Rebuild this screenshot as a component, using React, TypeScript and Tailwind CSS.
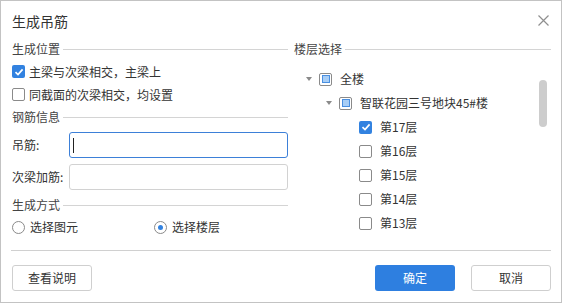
import React from "react";

const font = { fontFamily: '"Noto Sans CJK SC", "Noto Sans", sans-serif' };

function Check({ checked }: { checked?: boolean }) {
  if (checked)
    return (
      <span className="flex h-[13px] w-[13px] shrink-0 items-center justify-center rounded-[2px] bg-[#3282e0]">
        <svg width="10" height="10" viewBox="0 0 10 10">
          <path d="M1.5 5.2 L4 7.6 L8.6 2.4" fill="none" stroke="#fff" strokeWidth="1.7" />
        </svg>
      </span>
    );
  return <span className="block h-[13px] w-[13px] shrink-0 rounded-[2px] border border-[#8a8a8a] bg-white" />;
}

function Partial() {
  return (
    <span className="flex h-[13px] w-[13px] shrink-0 items-center justify-center rounded-[2px] border border-[#8a8a8a] bg-white">
      <span className="block h-[8px] w-[8px] border border-[#4a8fe0] bg-[#a8cef6]" />
    </span>
  );
}

function Radio({ checked }: { checked?: boolean }) {
  return (
    <span className="flex h-[13px] w-[13px] shrink-0 items-center justify-center rounded-full border border-[#8a8a8a] bg-white">
      {checked && <span className="block h-[5px] w-[5px] rounded-full bg-[#3282e0]" />}
    </span>
  );
}

function Header({ title }: { title: string }) {
  return (
    <div className="flex h-[18px] items-center">
      <span className="text-[12px] leading-[18px] text-[#444]">{title}</span>
      <span className="ml-[3px] h-px flex-1 bg-[#d4d4d4]" />
    </div>
  );
}

function Arrow() {
  return (
    <span className="flex w-[13px] shrink-0 items-center">
      <span className="block h-0 w-0 border-l-[3px] border-r-[3px] border-t-[4px] border-l-transparent border-r-transparent border-t-[#8a8a8a]" />
    </span>
  );
}

export default function App() {
  const floors = [
    { n: "第17层", c: true },
    { n: "第16层" },
    { n: "第15层" },
    { n: "第14层" },
    { n: "第13层" },
  ];
  return (
    <div style={font} className="h-[303px] w-[562px] border border-[#c3c3c3] bg-white text-[#333]">
      {/* title */}
      <div className="flex h-[39px] items-center pl-[11px] pr-[12px]">
        <span className="text-[14px] leading-[20px] text-[#333]">生成吊筋</span>
        <span className="flex-1" />
        <svg width="11" height="11" viewBox="0 0 11 11">
          <path d="M0.5 0.5 L10.5 10.5 M10.5 0.5 L0.5 10.5" stroke="#8f8f8f" strokeWidth="1.2" />
        </svg>
      </div>

      <div className="flex h-[199px] gap-[6px] pl-[11px] pr-[10px]">
        {/* left column */}
        <div className="flex w-[276px] flex-col">
          <Header title="生成位置" />
          <div className="mt-[2px] flex h-[23px] items-center gap-[4px] text-[12px]">
            <Check checked />
            <span>主梁与次梁相交，主梁上</span>
          </div>
          <div className="flex h-[23px] items-center gap-[4px] text-[12px]">
            <Check />
            <span>同截面的次梁相交，均设置</span>
          </div>
          <div className="mt-[2px]">
            <Header title="钢筋信息" />
          </div>
          <div className="mt-[6px] flex items-center">
            <span className="w-[57px] text-[12px]">吊筋:</span>
            <div className="flex h-[26px] flex-1 items-center rounded-[3px] border border-[#3d80d8] pl-[3px]">
              <span className="block h-[15px] w-px bg-[#222]" />
            </div>
          </div>
          <div className="mt-[6px] flex items-center">
            <span className="w-[57px] text-[12px]">次梁加筋:</span>
            <div className="h-[26px] flex-1 rounded-[3px] border border-[#d2d2d2]" />
          </div>
          <div className="mt-[6px]">
            <Header title="生成方式" />
          </div>
          <div className="mt-[2px] flex h-[22px] items-center text-[12px]">
            <span className="flex w-[142px] items-center gap-[5px]">
              <Radio />
              <span>选择图元</span>
            </span>
            <span className="flex items-center gap-[5px]">
              <Radio checked />
              <span>选择楼层</span>
            </span>
          </div>
        </div>

        {/* right column */}
        <div className="relative flex flex-1 flex-col">
          <Header title="楼层选择" />
          <div className="mt-[9px] flex flex-col pl-[12px] text-[12px]">
            <div className="flex h-[24px] items-center">
              <Arrow />
              <Partial />
              <span className="ml-[8px]">全楼</span>
            </div>
            <div className="flex h-[24px] items-center pl-[20px]">
              <Arrow />
              <Partial />
              <span className="ml-[8px]">智联花园三号地块45#楼</span>
            </div>
            {floors.map((f) => (
              <div key={f.n} className="flex h-[24px] items-center pl-[53px]">
                <Check checked={f.c} />
                <span className="ml-[8px]">{f.n}</span>
              </div>
            ))}
          </div>
          <span className="absolute right-[4px] top-[40px] block h-[47px] w-[8px] rounded-full bg-[#cdcdcd]" />
        </div>
      </div>

      {/* footer */}
      <div className="mx-[10px] mt-[11px] h-px bg-[#d0d0d0]" />
      <div className="mt-[14px] flex items-center pl-[11px] pr-[10px] text-[12px]">
        <button className="h-[26px] w-[80px] rounded-[3px] border border-[#cfcfcf] bg-white text-[#333]">查看说明</button>
        <span className="flex-1" />
        <button className="h-[26px] w-[80px] rounded-[3px] bg-[#2e7fe0] text-white">确定</button>
        <button className="ml-[16px] h-[26px] w-[80px] rounded-[3px] border border-[#cfcfcf] bg-white text-[#333]">取消</button>
      </div>
    </div>
  );
}
